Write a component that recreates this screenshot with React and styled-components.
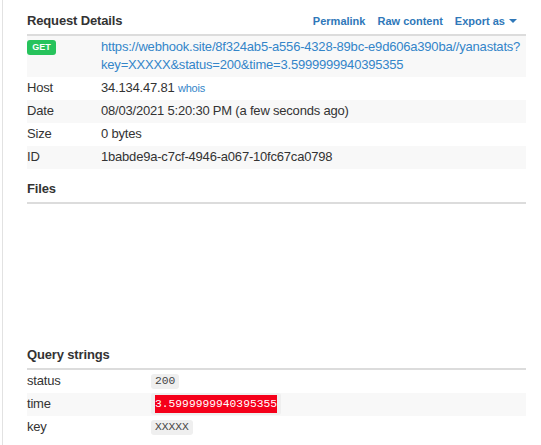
import styled, { createGlobalStyle } from "styled-components";

const GlobalStyle = createGlobalStyle`
  html, body {
    margin: 0;
    padding: 0;
    background: #fff;
  }
  body {
    font-family: "Liberation Sans", Arial, sans-serif;
    font-size: 13px;
    color: #333;
  }
`;

const details = [
  { label: "Date", value: "08/03/2021 5:20:30 PM (a few seconds ago)" },
  { label: "Size", value: "0 bytes" },
  { label: "ID", value: "1babde9a-c7cf-4946-a067-10fc67ca0798" },
];

function App() {
  return (
    <Page>
      <GlobalStyle />
      <Section>
        <SectionHead>
          <Title>Request Details</Title>
          <HeadLinks>
            <HeadLink>Permalink</HeadLink>
            <HeadLink>Raw content</HeadLink>
            <HeadLink>
              Export as <Caret />
            </HeadLink>
          </HeadLinks>
        </SectionHead>
        <Table>
          <Row $striped>
            <Label $width="74px">
              <MethodBadge>GET</MethodBadge>
            </Label>
            <Value>
              <UrlLink>
                https://webhook.site/8f324ab5-a556-4328-89bc-e9d606a390ba//yanastats?
                <wbr />
                key=XXXXX&amp;status=200&amp;time=3.5999999940395355
              </UrlLink>
            </Value>
          </Row>
          <Row>
            <Label $width="74px">Host</Label>
            <Value>
              34.134.47.81 <Whois>whois</Whois>
            </Value>
          </Row>
          {details.map((d, i) => (
            <Row key={d.label} $striped={i % 2 === 0}>
              <Label $width="74px">{d.label}</Label>
              <Value>{d.value}</Value>
            </Row>
          ))}
        </Table>
      </Section>

      <Section>
        <SectionHead>
          <Title>Files</Title>
        </SectionHead>
        <EmptyBody />
      </Section>

      <Section>
        <SectionHead>
          <Title>Query strings</Title>
        </SectionHead>
        <Table>
          <Row>
            <Label $width="124px">status</Label>
            <CodeCell>
              <Code>200</Code>
            </CodeCell>
          </Row>
          <Row $striped>
            <Label $width="124px">time</Label>
            <CodeCell>
              <Code>
                <Marked>3.5999999940395355</Marked>
              </Code>
            </CodeCell>
          </Row>
          <Row>
            <Label $width="124px">key</Label>
            <CodeCell>
              <Code>XXXXX</Code>
            </CodeCell>
          </Row>
        </Table>
      </Section>
    </Page>
  );
}

export default App;

const Page = styled.div`
  margin-left: 2px;
  border-left: 1px solid #e2e2e2;
  min-height: 100vh;
  box-sizing: border-box;
  padding: 1px 15px 0 24px;
`;

const Section = styled.section`
  margin-top: 11px;
`;

const SectionHead = styled.div`
  display: flex;
  align-items: baseline;
  justify-content: space-between;
  padding-bottom: 4px;
  border-bottom: 2px solid #dcdcdc;
`;

const Title = styled.h4`
  margin: 0;
  font-size: 13px;
  line-height: 18px;
  font-weight: bold;
  letter-spacing: -0.15px;
  color: #333;
`;

const HeadLinks = styled.div`
  display: flex;
  gap: 12px;
  padding-right: 9px;
`;

const HeadLink = styled.a`
  font-size: 11px;
  font-weight: bold;
  color: #2f78b9;
  cursor: pointer;
  display: inline-flex;
  align-items: center;
  gap: 4px;
`;

const Caret = styled.span`
  width: 0;
  height: 0;
  border-left: 4px solid transparent;
  border-right: 4px solid transparent;
  border-top: 4px solid #2f78b9;
`;

const Table = styled.div`
  display: flex;
  flex-direction: column;
`;

const Row = styled.div`
  display: flex;
  padding: 2px 0 3px;
  line-height: 18px;
  letter-spacing: -0.2px;
  background: ${(p) => (p.$striped ? "#f8f8f8" : "transparent")};
`;

const Label = styled.div`
  flex: 0 0 ${(p) => p.$width};
  display: flex;
  align-items: flex-start;
`;

const Value = styled.div`
  flex: 1;
  min-width: 0;
`;

const CodeCell = styled.div`
  flex: 1;
  height: 18px;
  display: flex;
  align-items: center;
`;

const MethodBadge = styled.span`
  display: block;
  margin-top: 2px;
  width: 29px;
  height: 15px;
  line-height: 15px;
  text-align: center;
  border-radius: 3px;
  background: #27c35c;
  color: #fff;
  font-size: 9px;
  font-weight: bold;
  letter-spacing: 0;
`;

const UrlLink = styled.a`
  color: #3385c9;
  cursor: pointer;
`;

const Whois = styled.a`
  font-size: 11px;
  line-height: 1;
  color: #3385c9;
  cursor: pointer;
`;

const EmptyBody = styled.div`
  height: 131px;
`;

const Code = styled.code`
  display: inline-block;
  font-family: "Liberation Mono", "DejaVu Sans Mono", monospace;
  font-size: 11.3px;
  line-height: 11px;
  letter-spacing: 0;
  color: #444;
  background: #efefef;
  border-radius: 3px;
  padding: 2px 4px;
`;

const Marked = styled.span`
  display: inline-block;
  line-height: 18px;
  background: #f5001a;
  color: #fff;
`;
